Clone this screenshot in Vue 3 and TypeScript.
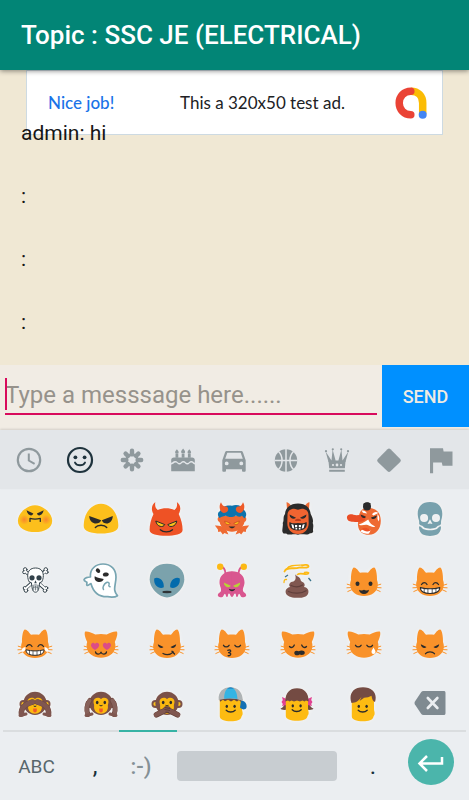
<script setup lang="ts">
import { ref } from 'vue'

interface Glyph {
  label: string
  art: string
}

const draft = ref('')
const messages = ref<string[]>(['admin: hi', ':', ':', ':'])
const activeCategory = ref(1)

function send(): void {
  if (!draft.value) return
  messages.value.push('admin: ' + draft.value)
  draft.value = ''
}

const ink = 'fill="none" stroke="#2b2b2b" stroke-width="1.3" stroke-linecap="round" stroke-linejoin="round"'

/* Category glyphs, 30 x 30 */
const categories: Glyph[] = [
  {
    label: 'Recent',
    art: '<circle cx="15" cy="15" r="11.2" fill="none" stroke="currentColor" stroke-width="2.2"/><path d="M14.8 8.5v7l5.8 3.4" fill="none" stroke="currentColor" stroke-width="2"/>',
  },
  {
    label: 'Smileys',
    art: '<circle cx="15" cy="15" r="12" fill="none" stroke="currentColor" stroke-width="2.2"/><circle cx="10.4" cy="12.3" r="1.9"/><circle cx="19.6" cy="12.3" r="1.9"/><path d="M10 17.6c2 3.6 8 3.6 10 0" fill="none" stroke="currentColor" stroke-width="1.9" stroke-linecap="round"/>',
  },
  {
    label: 'Nature',
    art:
      '<g fill="none" stroke="currentColor" stroke-width="4.4" stroke-linecap="round"><path d="M15 9.4V5.8M15 20.6v3.6M9.4 15H5.8M20.6 15h3.6M11 11L8.6 8.6M19 11l2.4-2.4M11 19l-2.4 2.4M19 19l2.4 2.4"/></g><circle cx="15" cy="15" r="5.4" fill="none" stroke="currentColor" stroke-width="2.6"/>',
  },
  {
    label: 'Food',
    art: '<path d="M3.2 19.4c2 .2 2.6-1.8 4.3-1.8 2 0 2 2 4 2s2-2 3.8-2 2 2 4 2 2-2 4-2c1.6 0 1.7 1.8 3.5 1.8v6.8H3.2zM3.2 17.7v-2.5c0-1.8 1-2.8 2.8-2.8h18c1.8 0 2.8 1 2.8 2.8v2.5c-1.2 0-1.5-1.7-3.4-1.7-2.2 0-2.2 2-4 2s-1.9-2-4.1-2-2 2-3.9 2-1.9-2-4.2-2c-2 0-2.6 1.7-4 1.7z"/><path d="M7.5 8.8h2.8v4H7.5zM13.7 8.8h2.8v4h-2.8zM19.9 8.8h2.8v4h-2.8z"/><path d="M8.9 4.2c1.2 1.5 1.8 2.2 1.8 3a1.8 1.5 0 0 1-3.6 0c0-.8.6-1.5 1.8-3zM15.1 3.4c1.4 1.7 2 2.6 2 3.5a2 1.7 0 0 1-4 0c0-.9.6-1.8 2-3.5zM21.3 4.2c1.2 1.5 1.8 2.2 1.8 3a1.8 1.5 0 0 1-3.6 0c0-.8.6-1.5 1.8-3z"/>',
  },
  {
    label: 'Travel',
    art: '<path fill-rule="evenodd" d="M3.3 15.2L6 7.4C6.4 6.3 7 5.9 8.1 5.9h13.8c1.1 0 1.7.4 2.1 1.5l2.7 7.8v10.3c0 .8-.5 1.3-1.3 1.3h-1.1c-.8 0-1.3-.5-1.3-1.3v-1.3H7v1.3c0 .8-.5 1.3-1.3 1.3H4.6c-.8 0-1.3-.5-1.3-1.3zM8.3 7.7l-2.1 6h17.6l-2.1-6zM7.7 16.5a1.9 1.9 0 1 0 0 3.8 1.9 1.9 0 0 0 0-3.8zm14.6 0a1.9 1.9 0 1 0 0 3.8 1.9 1.9 0 0 0 0-3.8z"/>',
  },
  {
    label: 'Activity',
    art: '<circle cx="15" cy="15.5" r="11.2"/><path d="M15 4v23M3.5 15.5h23M7.3 6.2c5 4.8 5 13.8 0 18.6M22.7 6.2c-5 4.8-5 13.8 0 18.6" fill="none" stroke="#e3e6e9" stroke-width="1.5"/>',
  },
  {
    label: 'Objects',
    art: '<path d="M6.500 17L3.600 6.500l5.900 9L10.600 4.500l3 11h2.800l3-11 1.100 11 5.900-9L23.500 17z"/><circle cx="4" cy="6.2" r="1.1"/><circle cx="10.800" cy="4.3" r="1.1"/><circle cx="19.200" cy="4.3" r="1.1"/><circle cx="26" cy="6.2" r="1.1"/><path d="M6.5 16.2h17l-.6 7H7.2zM7.2 24.700h15.600v2H7.200z"/><g fill="#e3e6e9"><circle cx="11" cy="20" r="1.1"/><circle cx="15" cy="20" r="1.4"/><circle cx="19" cy="20" r="1.1"/></g>',
  },
  {
    label: 'Symbols',
    art: '<path d="M13.5 4.200q1.500-1.400 3 0l9.700 9.700q1.400 1.500 0 3l-9.700 9.400q-1.500 1.400-3 0l-9.700-9.400q-1.400-1.500 0-3z"/>',
  },
  {
    label: 'Flags',
    art: '<path d="M5 3.3h13l.6 3.2h8.9v14.3h-10l-.7-3.2H8.1v10.6H5z"/>',
  },
]

const straightHead =
  '<path d="M5 17C4.800 11.500 6 4.400 8 4.400c2 0 4.400 3.200 6 5.400 2.500-.4 5.500-.4 8 0 1.600-2.200 4-5.400 6-5.400s3.200 7.100 3 12.600c.7 2 1 3.800.8 5.500C31 29 25.500 33 18 33S5 29 4.200 22.500C4 20.800 4.300 19 5 17z" fill="#f9922a"/>'
const tiltedHead =
  '<path d="M4.200 17C1.500 11.500 1.200 8 2.200 6.600 4 6 9.500 7.500 12.300 9.600c4-.7 7.400-.7 11.400 0C26.500 7.500 32 6 33.800 6.600c1 1.400.7 4.900-2 10.400.7 2 .8 4 .4 5.800C31 29 25 32.800 18 32.800S5 29 3.800 22.800C3.400 21 3.500 19 4.200 17z" fill="#f9922a"/>'
const whiskers =
  '<path d="M1.200 21.200l4 1.200M.9 24.800l4.200-.2M1.800 28.500l3.800-1.700M34.800 21.200l-4 1.200M35.100 24.800l-4.200-.2M34.200 28.500l-3.800-1.700" fill="none" stroke="#f9922a" stroke-width="1" stroke-linecap="round"/>'

function cat(face: string, tilted = false): string {
  return whiskers + (tilted ? tiltedHead : straightHead) + face
}

/* Draws a left half and its mirror image about x = 18 */
function mirrored(half: string): string {
  return half + '<g transform="matrix(-1 0 0 1 36 0)">' + half + '</g>'
}

const grin =
  '<path d="M9 25.8c6 1.500 12 1.500 18 0 .2 3.700-3.500 5.500-9 5.500s-9.200-1.800-9-5.500z" fill="#fff" stroke="#2b2b2b" stroke-width="1"/><path d="M12.500 26.500v4M16 27v4.300M20 27v4.300M23.500 26.500v4" stroke="#2b2b2b" stroke-width=".7"/>'
const grinEyes = `<path d="M9.5 21.5c1.6-2.400 4-2.400 5.500 0M21 21.500c1.500-2.400 3.900-2.400 5.500 0" ${ink}/>`
const angryEyes =
  '<path d="M8.800 19.300l5.700 2.700c-1.700 2-5.200 1.200-5.700-2.700zM27.200 19.300l-5.700 2.700c1.700 2 5.200 1.200 5.700-2.700z" fill="#2b2b2b"/>'
const shutEyes = `<path d="M9.5 20.3c1.3 2.200 4 2.200 5.600 0M20.900 20.300c1.600 2.200 4.300 2.200 5.600 0" ${ink}/>`

const monkeyHead =
  '<circle cx="6.500" cy="17" r="4" fill="#7b5148"/><circle cx="29.500" cy="17" r="4" fill="#7b5148"/><circle cx="6.300" cy="17" r="1.900" fill="#fcc21b"/><circle cx="29.700" cy="17" r="1.900" fill="#fcc21b"/><circle cx="18" cy="16.300" r="11.600" fill="#7b5148"/><path d="M18 12.200c-2-2.600-7.500-1.800-7.500 2.500 0 1.800.9 2.600.6 4.600-.5 4.600 3 7.500 6.900 7.500s7.400-2.900 6.900-7.500c-.3-2 .6-2.800.6-4.600 0-4.300-5.500-5.100-7.500-2.500z" fill="#fcb90f"/>'
const monkeyEyes =
  '<ellipse cx="14.200" cy="15.500" rx="1.300" ry="1.800" fill="#2b2b2b"/><ellipse cx="21.800" cy="15.500" rx="1.300" ry="1.800" fill="#2b2b2b"/><path d="M16.500 18.300q1.500 1.200 3 0" fill="none" stroke="#2b2b2b"/>'
const monkeyMouth = '<path d="M16.200 21.500h3.600v2.300a1.800 1.800 0 0 1-3.600 0z" fill="#f0592b"/>'

const kidFace =
  '<path d="M5.800 12C5.800 8 9 6 17 6s11 2 11 6v10c0 2 .9 3.300.6 5-.1 1.300-1 2-1.200 3-.6 3-5 4.300-10.400 4.300-6.800 0-11.200-1.600-11.200-5z" fill="#fdbb12"/><ellipse cx="12.800" cy="19.300" rx="1.200" ry="1.600" fill="#2b2b2b"/><ellipse cx="20.600" cy="19.300" rx="1.200" ry="1.600" fill="#2b2b2b"/>' +
  `<path d="M12.2 23.2c2.3 2.400 6.700 2.400 9 0" ${ink}/>`

/* Emoji artwork, 36 x 36 */
const emojis: Glyph[] = [
  {
    label: 'Pouting face',
    art: '<defs><radialGradient id="blush"><stop offset="0" stop-color="#f9872d"/><stop offset="1" stop-color="#f9872d" stop-opacity="0"/></radialGradient></defs><path d="M18 4.200c8.500 0 17.200 8.400 17.200 15.500C35.200 27.500 27 31 18 31S.9 27.500.9 19.700C.9 12.600 9.500 4.200 18 4.200z" fill="#fcbf1c"/><circle cx="7.300" cy="18.700" r="5" fill="url(#blush)"/><circle cx="29" cy="18.700" r="5" fill="url(#blush)"/><path d="M9.500 9.300l6.800 3.300c-.6 2.800-5.500 2.800-6.800-3.300zM26.700 9.300l-6.800 3.300c.6 2.800 5.500 2.800 6.800-3.300z" fill="#2b2b2b"/>' +
      `<path d="M13 20.4v-3c3 .8 7 .8 10.300 0v3" ${ink}/>`,
  },
  {
    label: 'Angry face',
    art: '<path d="M18 2.700c10 0 17.300 9.800 17.300 22.300C35.300 30.600 28 32.500 18 32.500S.7 30.600.7 25C.7 12.500 8 2.700 18 2.700z" fill="#fcbf1c"/><path d="M6.200 15l12 4.200c-1.300 4.500-11.300 5.500-12-4.200zM29.800 15l-11 4.200c1.300 4.500 10.300 5.500 11-4.200z" fill="#2b2b2b"/>' +
      `<path d="M12.3 26.5c2.300-3 9.200-3 11.500 0" ${ink}/>`,
  },
  {
    label: 'Smiling devil',
    art: '<path d="M6.300 1C2.300 4 2 9 4.500 13 2 18 .6 24 .6 29c0 4.400 8 5.700 16.500 5.700s16.500-1.300 16.500-5.700c0-5-1.400-11-3.900-16 2.500-4 2.200-9-1.800-12 .5 3 .1 6-2.400 7.900-5-2.200-11.700-2.200-16.800 0C6.200 7 5.800 4 6.300 1z" fill="#ee5225"/><path d="M6.800 20l9 3.600c-1.500 3.200-8 2.600-9-3.600zM27.800 20l-9 3.600c1.500 3.200 8 2.600 9-3.600z" fill="#fcc21b" stroke="#2b2b2b" stroke-width="1"/>' +
      `<path d="M11.300 28.700c3 3 9.200 3 12.200 0" ${ink}/>`,
  },
  {
    label: 'Imp',
    art:
      mirrored('<path d="M.9 24.500c4-.2 8.500.8 11 3.200l2.500 5.800-4-1.500-1.600 1.600-2.200-3-2.400.3-.3-2.500z" fill="#ee6a32"/>') +
      '<path d="M6 15h24c3 1 3 5 .5 6C29 27 24 30.800 18 30.800S7 27 5.500 21C3 20 3 16 6 15z" fill="#ee6a32"/><path d="M5.500 17C2.800 14 4 11 6.200 10 7.500 5 14 4 18 4.800c5-2 10 0 12 4.200 3 3 2.800 6 .5 8.500-1-1-1.800-2-2.500-2.800-2 1.500-4.500 1-6-.2-4 2.500-8 1.500-10 .3-2 .3-4.500.7-6.500 2.200z" fill="#0c73ad"/>' +
      mirrored('<path d="M7 1.200C4.500 5 5.500 10.500 9.500 12c2.500 0 4.500-1.500 4.700-3.500.1-1.500-.7-2.500-1.700-3C10 6 8 4 7 1.200z" fill="#ee5a28"/><path d="M10.700 20l5.500 2.200c-1 2.200-5 1.800-5.500-2.200z" fill="#fcc21b" stroke="#bd3b1d" stroke-width=".6"/>') +
      '<path d="M14.700 25.500c2 2.400 4.600 2.400 6.600 0z" fill="#2b2b2b"/>',
  },
  {
    label: 'Ogre',
    art:
      mirrored('<path d="M6.500 1.200c1.500 0 4 2 4.500 4l-4 3z" fill="#ee6a32"/>') +
      '<path d="M18 2.500C10 2.500 5.500 7 5 13c-2.500 3-.5 6-2.300 9 .8 3-1 6-.2 9 1.500 3 3.500.5 5 2.500 4 .5 5-1 10.500.2 4-1.200 7 .2 10.500-.5 1.500-1.700 4 0 4.700-2.700-.8-3 1-5-.5-8.500 1-3-.5-6-2-9C30 7 26 2.500 18 2.500z" fill="#2b2b2b"/><path d="M7.500 14c0-4 3-6.200 6.500-6.200 2 0 2.500 1 4 1s2-1 4-1c3.500 0 6.500 2.200 6.500 6.200l.2 8C28.700 28 25 33 18 33S7.300 28 7.300 22z" fill="#f06431"/>' +
      mirrored('<path d="M9.500 13.500l6.500 3.200c-2 2-6 1.300-6.500-3.200z" fill="#2b2b2b"/>') +
      '<path d="M15.500 18.500q2.500-1.500 5 0l.5 1.500h-6z" fill="#b93b1b"/><path d="M9.500 21c3 2 5.500 1 8.500 1s5.500 1 8.500-1c1 4-.5 8.500-8.500 8.500s-9.500-4.500-8.500-8.500z" fill="#2b2b2b"/><path d="M11.300 23l2.200.8.8 4-2-.8zM24.700 23l-2.200.8-.8 4 2-.8zM15 24h2.200v2.300H15zM18.800 24H21v2.300h-2.200zM15.500 27h1.700v1.500h-1.700zM18.800 27h1.700v1.500h-1.700z" fill="#fff"/>',
  },
  {
    label: 'Goblin',
    art: '<path d="M22 6.800c8 0 12.800 5 12.800 13C34.800 28 30 33.800 23 33.800c-6 0-10.500-3.300-11-9.300-.2-2 0-3 .5-4.500C12.500 12 15 6.800 22 6.800z" fill="#ee6a32"/><path d="M15.500 9.500c2.500-.5 4.500.7 5.500 3l-4-.8zM26 13.200c2.300-2.500 4.500-2.700 6.300-1.200l-4.800 2.500z" fill="#fff"/><path d="M31.500 13c2 2 2.300 5 1.200 7.500l-1.200-2.500zM12.700 23.500c5-1.500 8-4 9.500-5 1.500 4 4 5.500 7 7-2.500 1.500-4.500-.5-7.500-1.500-3.500-1-5 1.500-9-.5z" fill="#fff"/><path d="M14.500 30.500c1.500-3.200 7.500-3.800 10-1l-1.500 3c-3 .5-5.500 0-8.500-2z" fill="#fff"/><path d="M15.500 28.300c2.500-2.500 7-1.800 9 1.200-3 1.800-6 .8-9-1.200z" fill="#ee5225"/><path d="M1 17c-.5-3 3-4.400 6.500-3.300 4 1.300 7-.7 10 .3 2.500 1 2.500 5 0 6-4.500 1.600-7.500 1-10.500.8C4 20.500 1.300 20 1 17z" fill="#e94d25"/><path d="M14.500 13.500l5.500 2.200c-1 2-4.500 2-5.500-2.200zM31 14.500l-6 2c1 2.500 5.200 2 6-2z" fill="#2b2b2b"/><circle cx="21" cy="5.500" r="4" fill="#2b2b2b"/><path d="M17.500 3.500q3-3 7-.5" fill="none" stroke="#2b2b2b" stroke-width="1.3"/>',
  },
  {
    label: 'Skull',
    art: '<path fill-rule="evenodd" d="M18 1c8 0 12.300 4.500 12.300 12 0 3-.8 5-1.200 7-.3 2 .5 3-1 4-1.500.8-2.800.6-4 2.500-3 1.500-9 1.500-12 0-1.200-1.900-2.500-1.700-4-2.500-1.500-1-.7-2-1-4-.4-2-1.400-4-1.400-7C5.700 5.500 10 1 18 1zM12 13a4 4 0 1 0 .2 8A4 4 0 0 0 12 13zM24 13a4 4 0 1 0 0 8 4 4 0 0 0 0-8zM18 18.300l-2.500 4.700 2.500-.6 2.500.6z" fill="#78a1ad"/><path d="M7.300 25.300c1.700 0 2.300 1.500 3.700 2.700 4 1.700 10 1.700 14 0 1.400-1.200 2-2.700 3.700-2.700 1 2-.7 6.700-3.500 8.300-4 1.700-10.400 1.700-14.400 0C8 32 6.300 27.300 7.300 25.300z" fill="#78a1ad"/>',
  },
  {
    label: 'Skull and crossbones',
    art: '<g stroke-linecap="round"><path d="M8 8l20 18M28 8L8 26" stroke="#33424b" stroke-width="3.600"/><g fill="#fff" stroke="#33424b" stroke-width="1"><circle cx="8.200" cy="6.500" r="1.800"/><circle cx="7.200" cy="9.200" r="1.500"/><circle cx="28.800" cy="6.500" r="1.800"/><circle cx="29.600" cy="9.200" r="1.500"/><circle cx="9" cy="27.500" r="1.800"/><circle cx="7.700" cy="25" r="1.500"/><circle cx="28" cy="27.500" r="1.800"/><circle cx="29.300" cy="25" r="1.500"/></g><path d="M8.200 8.200l20 17.500M28.500 8.200L8.500 25.800" stroke="#fff" stroke-width="1.900"/></g><path d="M18.500 5c-5 0-7.800 3-7.800 7.500 0 3 .7 5 1.700 6.500l2 .7.700 5c.3 2.800 1.600 4.500 3.400 4.500s3.100-1.700 3.400-4.500l.7-5 2-.7c1-1.500 1.700-3.500 1.700-6.500C26.300 8 23.500 5 18.500 5z" fill="#fff" stroke="#33424b" stroke-width="1"/><circle cx="15" cy="14.800" r="2.600" fill="#33424b"/><circle cx="22" cy="14.800" r="2.600" fill="#33424b"/><path d="M17.200 20.200l1.300-3 1.300 3z" fill="#33424b"/><path d="M15.500 22.500q3-1.500 6 0M15.700 24.500q2.800-1.200 5.600 0M16.700 23v4M18.500 22.500v5M20.300 23v4" fill="none" stroke="#5f6c74" stroke-width=".8"/>',
  },
  {
    label: 'Ghost',
    art: '<path d="M7.500 14C6.500 6 13 1 20 1c8 0 13 5.500 13 13 0 6-2 10-1.200 13.500.4 2.500 1.700 4 2.700 5.200-3 2-7 1.500-10 1-7 .2-13.500-2-16.500-13-2 .3-2 2-4 1.700-.8-1.200.3-2-.2-3.200-1-1-2.600-.8-2.800-2.500.5-1.800 4-2.800 6.500-2.700z" fill="#fff" stroke="#78a5b2" stroke-width="1.700" stroke-linejoin="round"/><path d="M20.500 26.500c-1.500-2 .5-5.500 3-7 1.700-.8 3.200.3 2.500 2.300-.5 1.200.2 1.700 1 2" fill="none" stroke="#78a5b2" stroke-width="1.500" stroke-linecap="round"/><ellipse cx="15" cy="7.700" rx="1.900" ry="2.500" fill="#2b2b2b" transform="rotate(-45 15 7.700)"/><ellipse cx="22.800" cy="11.500" rx="3" ry="2" fill="#2b2b2b" transform="rotate(-10 22.800 11.500)"/><path d="M11.700 13.200c2.300 1.800 6.300 2.200 9 2.800-.7 2.500-3.500 3.600-6.200 2.700-2.200-.8-3.500-3-2.800-5.500z" fill="#2b2b2b"/>',
  },
  {
    label: 'Alien',
    art: '<path d="M18 .8c10.500 0 17.300 6 17.300 15.500C35.300 26 25 34.500 18 34.500S.7 26 .7 16.300C.7 6.800 7.500.8 18 .8z" fill="#7ba2ac"/><path d="M5.200 15.500c4-2.500 10.300 1.500 9.600 8.800-4 2-10.400-.8-9.600-8.800zM30.800 15.500c-4-2.500-10.300 1.500-9.600 8.800 4 2 10.400-.8 9.600-8.800z" fill="#036bac"/><ellipse cx="18" cy="29" rx="4.700" ry="1.200" fill="#2f3437"/>',
  },
  {
    label: 'Alien monster',
    art:
      mirrored('<path d="M6.500 3.500q4.500.5 5 7" fill="none" stroke="#d9568f" stroke-width="1.800"/><circle cx="6.200" cy="3.800" r="3.200" fill="#fcb914"/><path d="M18.200 8.300C10 8.300 5.500 13 5.500 19.300c0 4 2 5.500 1.500 8.500-.5 2-3 2-3.200 4.500 0 1.800 2.700 2.200 4 2 2-.5 1.500-2.500 3-3.500 1.200 0 .7 3 2.200 3.300 1.500-.2.500-3 2-3.500 1.300 0 1 3 3.200 3.500z" fill="#d9568f"/>') +
      mirrored('<path d="M9.800 19.500l7 3.200c-1.500 2.700-6.800 1.700-7-3.200z" fill="#b8d334"/>') +
      '<path d="M14.800 25.800q3.200 1.500 6.400 0c-.7 3.300-5.700 3.300-6.400 0z" fill="#2b2b2b"/>',
  },
  {
    label: 'Pile of poo',
    art: '<g fill="none" stroke="#fcb914" stroke-linecap="round"><path d="M4.500 8.500C6 3 14 6.500 19 4.700c4-.8 9 1 9.500-1.200 0-2-4-2-6.500-1.200" stroke-width="1.800"/><path d="M6.500 6C9 1.800 16 2.200 22 2" stroke-width="1.200"/><path d="M17.500 11.500c3-2.500 8 .8 10.500-.7 2-1.300-1-2-3.500-1.300" stroke-width="1.600"/><path d="M6.500 16.500q-2.500-.5-2.500 3" stroke-width="1.300"/></g><path d="M5 14l3-2M28.500 15l2.500 3" stroke="#38728a" stroke-width="1.300"/><path d="M15 11.200c.7 1.600 5 2.500 5.500 5.300.2 1 .5 1.700 1.500 2.200 3 1.200 3.200 3.800 2 5.200 3.800.6 5 3.200 4.300 6-.8 3.600-5 4.900-10.300 4.900S8 34 6.200 31c-1.600-3 .2-6.500 4-7-2-1.800-.7-4.500 2-5.200 3.800-1 4-4 2.800-7.600z" fill="#805750"/><path d="M11 22.500c4 1.800 8.500 1.500 11.500-.5M8.500 28.500c5 2.500 13 2.300 17.500-.8" fill="none" stroke="#603f3b" stroke-width="1.300" stroke-linecap="round"/>',
  },
  {
    label: 'Smiling cat',
    art: cat(
      '<ellipse cx="11.500" cy="20.800" rx="2" ry="2.300" fill="#2b2b2b"/><ellipse cx="24.500" cy="20.800" rx="2" ry="2.300" fill="#2b2b2b"/><path d="M13 26.800c1.500.8 3.500.8 5 0 1.500.8 3.500.8 5 0-.3 2.700-2.200 4.200-5 4.200s-4.700-1.500-5-4.200z" fill="#2b2b2b"/>',
    ),
  },
  { label: 'Grinning cat', art: cat(grinEyes + '<g transform="translate(-1.200 -3) scale(1.070)">' + grin + '</g>') },
  {
    label: 'Cat with tears of joy',
    art: cat(
      grinEyes +
        '<g transform="translate(0 -1)">' + grin + '</g>' +
        '<path d="M8.500 22c-2.500.3-4.500 2-3.700 4.200 1.300 1.400 4 .3 3.700-4.200zM27.500 22c2.500.3 4.500 2 3.700 4.200-1.300 1.400-4 .3-3.700-4.200z" fill="#fff"/>',
    ),
  },
  {
    label: 'Cat with heart eyes',
    art: cat(
      '<path d="M12 25c-3.500-2-4.800-4.500-3.600-6.300 1-1.400 2.800-1.200 3.600.4.800-1.600 2.800-1.800 3.800-.4C17 20.500 15.500 23 12 25zM24 25c-3.500-2-5-4.500-3.800-6.300 1-1.400 3-1.200 3.800.4.800-1.600 2.600-1.800 3.600-.4C28.800 20.500 27.500 23 24 25z" fill="#dc4c87"/>' +
        `<path d="M12.5 26.800c.5 3 4.700 3 5.500.3.800 2.700 5 2.700 5.500-.3" ${ink}/>`,
      true,
    ),
  },
  { label: 'Wry cat', art: cat(angryEyes + `<path d="M14 28.500c3 1.700 7 1.500 10.300-1.500M23 26.300l2.500 2.700" ${ink}/>`) },
  {
    label: 'Kissing cat',
    art: cat(shutEyes + `<path d="M13.800 25.300c3-1.200 4.300 1.300.8 2.400 3.300.2 2.500 3.500-.5 3" ${ink}/>`),
  },
  {
    label: 'Weary cat',
    art: cat(
      `<path d="M9.5 21.500c1.500 1.800 4 1 4.800-1.500M26.500 21.500c-1.500 1.800-4 1-4.800-1.500" ${ink}/>` +
        '<path d="M14.300 28c0-2.500 2.500-2.800 4.500-1.800 2-1.200 6-1.200 6 1.500 0 2.500-3.500 2.500-5.300 1.800-2.200 1.500-5.200 1-5.200-1.500z" fill="#2b2b2b"/>',
      true,
    ),
  },
  {
    label: 'Crying cat',
    art: cat(
      shutEyes + '<path d="M27.500 22.500c1.200 2.200 2 3.300 2 4.500a2 2 0 0 1-4 0c0-1.200.8-2.300 2-4.500z" fill="#fff"/>',
      true,
    ),
  },
  { label: 'Angry cat', art: cat(angryEyes + `<path d="M13.500 28.700c2-2.500 7-2.500 9 0" ${ink}/>`) },
  {
    label: 'See-no-evil monkey',
    art:
      monkeyHead +
      monkeyMouth +
      '<path d="M16.700 19q1.300 1 2.600 0" fill="none" stroke="#2b2b2b"/><path d="M4.500 27C4 21 7 17.500 15.500 15M31.500 27C32 21 29 17.500 20.500 15" fill="none" stroke="#6e4840" stroke-width="5.600" stroke-linecap="round"/><path d="M4.500 27C4 21 7 17.500 15.500 15M31.500 27C32 21 29 17.500 20.500 15" fill="none" stroke="#805750" stroke-width="4.800" stroke-linecap="round"/><path d="M3 28.500l6-1.500M33 28.500l-6-1.500" stroke="#805750" stroke-width="3" stroke-linecap="round"/>',
  },
  {
    label: 'Hear-no-evil monkey',
    art:
      monkeyHead +
      monkeyEyes +
      monkeyMouth +
      '<path d="M5 27.500c-2-5-1-10 2-14M31 27.500c2-5 1-10-2-14" fill="none" stroke="#6e4840" stroke-width="5" stroke-linecap="round"/><path d="M4.500 27.500c-1.500-5-.5-10 2-14M31.500 27.500c1.500-5 .5-10-2-14" fill="none" stroke="#87615a" stroke-width="4" stroke-linecap="round"/><path d="M3 28.500l6-1.500M33 28.500l-6-1.500" stroke="#805750" stroke-width="3" stroke-linecap="round"/>',
  },
  {
    label: 'Speak-no-evil monkey',
    art:
      monkeyHead +
      monkeyEyes +
      '<path d="M7.500 27.800L19 22M28.500 27.800L17 22" stroke="#623f38" stroke-width="5.500" stroke-linecap="round"/><path d="M7 27.800L19 22M29 27.800L17 22" stroke="#805750" stroke-width="4.500" stroke-linecap="round"/><path d="M16 20.500l5 1M15.500 22.500l5.500 1M16.500 25l3.500.5" stroke="#4f312c" stroke-width=".7"/>',
  },
  {
    label: 'Boy with cap',
    art:
      kidFace +
      '<path d="M5.500 12q11.500-3.500 23 0l-1.500 3-2-2-2 1.500-3-1.800-3 1.800-3-1.800-3 1.500-2-1.500-3 2z" fill="#6c473f"/><path d="M27 13.500c4 0 6.500 4 5.300 7.500-1.500 2.500-5 1.300-6.300-.5z" fill="#1470b4"/><path d="M4.700 13C4 5 9 .3 16.500.3S29 5.500 28.700 14c-7-3.200-17-3.200-24-1z" fill="#aeb3b5"/><path d="M10.200 11.800C10 5 12.500.5 16.500.5S23.200 5 23.500 12c-4-1-9-1-13.300-.2z" fill="#34b4e4"/><path d="M13 1.500q3.500-2 7 0z" fill="#1470b4"/>',
  },
  {
    label: 'Girl',
    art:
      '<path d="M6 16c-2.500 1-1.500 4.500-5.500 5.500 1 1.700 5 2 7.500.5zM28 16c2.500 1 1.500 4.500 5.500 5.500-1 1.700-5 2-7.500.5z" fill="#704b43"/><path d="M2 10l4.500 2v6L2 19l.8-2L1.500 15l1.300-2zM32 10l-4.500 2v6l4.500 1-.8-2 1.300-2-1.300-2z" fill="#e04191"/><g transform="translate(0 -.5)">' +
      kidFace +
      '</g><path d="M17 1.300C9.500 1.300 5.500 6 5.300 14.500l2.700-1 1.500 1 2-1 2.500 1 3-1 3 1 2.500-1 2 1 1.500-1 2.700 1C28.500 6 24.500 1.300 17 1.300z" fill="#744b43"/>',
  },
  {
    label: 'Boy',
    art:
      kidFace +
      '<path d="M17 .3C8.500.3 4.500 5 4.500 11c0 1.800.3 3.500 1 5 4-.2 6.500-1.500 9.500-5.500 4 .5 8 0 10.500-1.700.5 3.500 1.500 5.500 3.500 6.200.5-1.500.7-3 .7-4.500C29.700 5 25 .3 17 .3z" fill="#744b43"/><path d="M15.500 10l-2 4 5-3.500z" fill="#744b43"/>',
  },
]

const backspace =
  '<path d="M11.500 4h20c1.500 0 2 .6 2 2v20c0 1.400-.5 2-2 2h-20c-1 0-1.700-.3-2.200-1l-6.500-9.800c-.5-.8-.5-1.600 0-2.400L9.300 5c.5-.7 1.200-1 2.200-1z" fill="#7f8a91"/><path d="M15.800 11l9.600 10M25.400 11l-9.600 10" stroke="#ebeef1" stroke-width="2.600" stroke-linecap="round"/>'
</script>

<template>
  <div class="screen">
    <header class="topbar">
      <h1>Topic : SSC JE (ELECTRICAL)</h1>
    </header>

    <main class="chat">
      <a class="ad" href="#">
        <span class="ad-cheer">Nice job!</span>
        <span class="ad-text">This a 320x50 test ad.</span>
        <svg class="ad-logo" viewBox="0 0 32 32" aria-hidden="true">
          <path d="M16 4.300c7 0 11.700 4.500 11.700 11.700v11" fill="none" stroke="#fbbc04" stroke-width="7.500" />
          <path d="M15.800 4.300C9 4.300 4.200 9.500 4.200 16S9 27.700 15.800 27.700" fill="none" stroke="#ea4335" stroke-width="7.500" stroke-linecap="round" />
          <circle cx="27.700" cy="27.700" r="4" fill="#4285f4" />
        </svg>
      </a>
      <ul class="messages">
        <li v-for="(message, i) in messages" :key="i">{{ message }}</li>
      </ul>
    </main>

    <form class="composer" @submit.prevent="send">
      <div class="field">
        <input v-model="draft" type="text" aria-label="Message" placeholder="Type a messsage here......" />
        <span class="caret"></span>
      </div>
      <button class="send" type="submit">SEND</button>
    </form>

    <section class="keyboard">
      <nav class="categories">
        <button
          v-for="(category, i) in categories"
          :key="category.label"
          type="button"
          :class="{ active: i === activeCategory }"
          :aria-label="category.label"
          @click="activeCategory = i"
        >
          <svg viewBox="0 0 30 30" fill="currentColor" v-html="category.art"></svg>
        </button>
      </nav>

      <div class="emojis">
        <button v-for="emoji in emojis" :key="emoji.label" type="button" :aria-label="emoji.label">
          <svg class="glow" viewBox="0 0 36 36" v-html="emoji.art"></svg>
        </button>
        <button type="button" aria-label="Backspace">
          <svg viewBox="0 0 36 36" v-html="backspace"></svg>
        </button>
      </div>

      <div class="pager"><span></span></div>

      <div class="keys">
        <button class="abc" type="button">ABC</button>
        <button class="mark" type="button">,</button>
        <button class="smile" type="button">:-)</button>
        <button class="space" type="button" aria-label="Space"></button>
        <button class="mark" type="button">.</button>
        <button class="enter" type="button" aria-label="Enter">
          <svg viewBox="0 0 46 46" aria-hidden="true">
            <path d="M34 18v6.500H12M19 17l-7.500 7.500L19 32" fill="none" stroke="#fff" stroke-width="2.500" />
          </svg>
        </button>
      </div>
    </section>
  </div>
</template>

<style>
body {
  margin: 0;
  background: #f0e8d4;
}
</style>

<style scoped>
.screen {
  display: flex;
  flex-direction: column;
  min-height: 100vh;
  font-family: Roboto, 'Liberation Sans', sans-serif;
  background: #f0e8d4;
}

button {
  margin: 0;
  padding: 0;
  border: 0;
  background: none;
  font-family: inherit;
  cursor: pointer;
}

svg {
  display: block;
}

.topbar {
  position: relative;
  z-index: 2;
  display: flex;
  align-items: center;
  height: 70px;
  padding: 0 21px;
  background: #028576;
  box-shadow: 0 1px 5px rgba(0, 0, 0, 0.45);
}

.topbar h1 {
  margin: 0;
  color: #fff;
  font-size: 26px;
  font-weight: 500;
  line-height: 32px;
}

.chat {
  flex: 1;
}

.ad {
  display: grid;
  grid-template-columns: 132fr 215fr 32px;
  align-items: center;
  box-sizing: border-box;
  height: 65px;
  margin: 0 26px;
  padding: 0 15px 0 21px;
  border: 1px solid #cddae2;
  background: #fff;
  color: #202124;
  font-family: Lato, sans-serif;
  font-size: 17px;
  text-decoration: none;
}

.ad-cheer {
  color: #1a73e8;
  font-weight: 500;
}

.ad-logo {
  width: 32px;
  height: 32px;
}

.messages {
  position: relative;
  margin: -33px 0 0;
  padding: 0 21px;
  list-style: none;
  color: #161616;
  font-size: 21px;
}

.messages li {
  line-height: 63px;
}

.composer {
  display: flex;
  padding-bottom: 3px;
  background: #f1ece4;
}

.field {
  position: relative;
  flex: 1;
  padding: 12px 5px;
}

.field input {
  box-sizing: border-box;
  width: 100%;
  height: 38px;
  padding: 0;
  border: 0;
  border-bottom: 2px solid #d80b5c;
  outline: 0;
  background: none;
  color: #222;
  font-family: inherit;
  font-size: 24px;
}

.field input::placeholder {
  color: #96928b;
  opacity: 1;
}

.caret {
  position: absolute;
  top: 13px;
  left: 5px;
  width: 2px;
  height: 32px;
  background: #d80b5c;
}

.send {
  width: 87px;
  background: #0090ff;
  color: #f0ebe2;
  font-size: 18px;
  font-weight: 500;
}

.keyboard {
  background: #ebeef1;
}

.categories {
  display: grid;
  grid-template-columns: repeat(9, 1fr);
  height: 59px;
  padding: 0 3px;
  background: #e3e6e9;
  box-shadow: 0 -1px 2px rgba(0, 0, 0, 0.12);
}

.categories button {
  display: flex;
  align-items: center;
  justify-content: center;
  color: #8f999d;
}

.categories button.active {
  color: #1f333d;
}

.categories svg {
  width: 30px;
  height: 30px;
}

.emojis {
  display: grid;
  grid-template-columns: repeat(7, 1fr);
  row-gap: 26px;
  padding: 12px 6px 7px 2px;
}

.emojis button {
  display: flex;
  justify-content: center;
}

.emojis svg {
  width: 36px;
  height: 36px;
}

.glow {
  overflow: visible;
  filter: drop-shadow(0 0 2px #f6f5f3);
}

.pager {
  display: grid;
  grid-template-columns: 116fr 58fr 289fr;
  height: 2px;
  margin: 0 3px;
  background: #dadddf;
}

.pager span {
  grid-column: 2;
  background: #37b3a5;
}

.keys {
  display: grid;
  grid-template-columns: 73fr 44fr 48fr 184fr 48fr 68fr;
  align-items: center;
  height: 68px;
  padding-right: 4px;
}

.abc {
  color: #58666c;
  font-size: 19px;
}

.mark {
  color: #16303b;
  font-size: 24px;
}

.smile {
  color: #849096;
  font-size: 22px;
  font-weight: 500;
}

.space {
  height: 30px;
  margin: 0 12px;
  border-radius: 4px;
  background: #c8cdd1;
}

.enter {
  justify-self: center;
  width: 46px;
  height: 46px;
  margin-bottom: 8px;
  border-radius: 50%;
  background: #4bb5ab;
}
</style>
